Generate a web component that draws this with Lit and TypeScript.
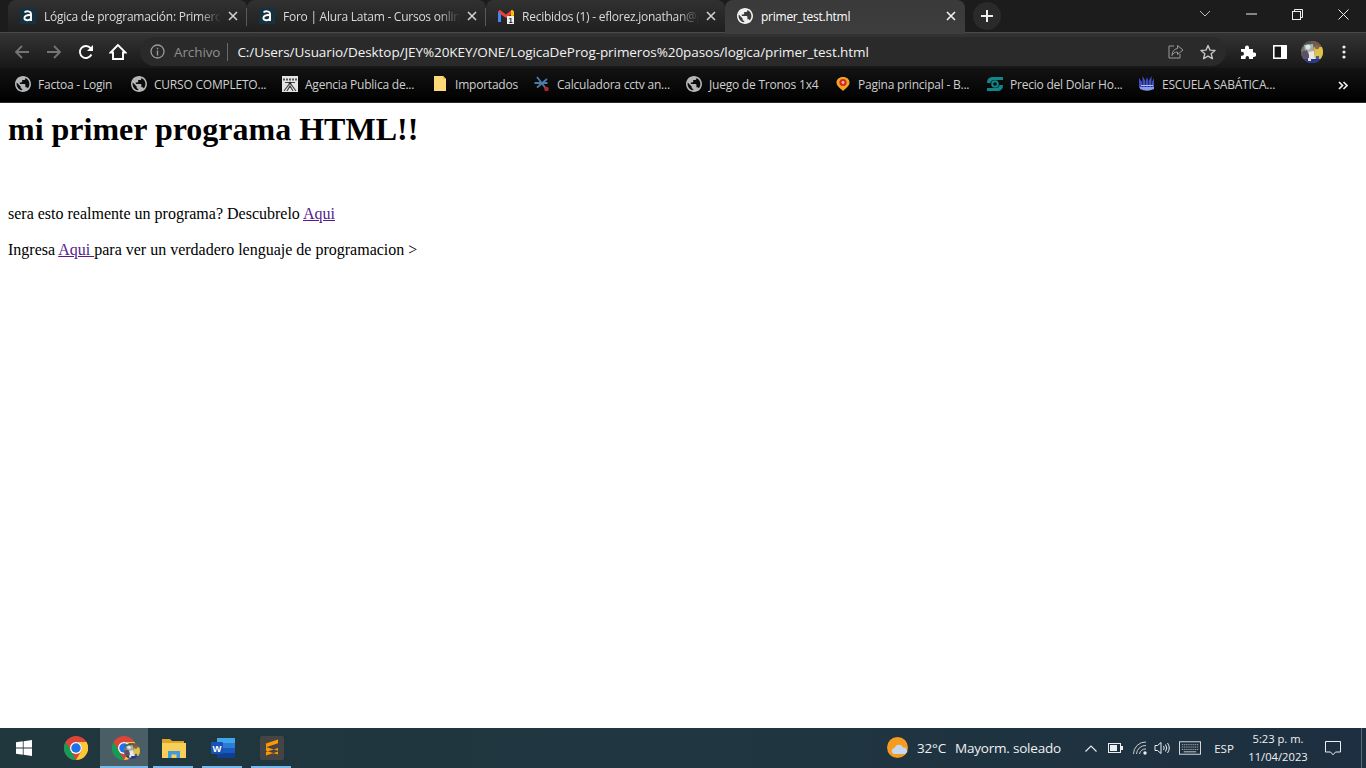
import { LitElement, html, css } from "lit";
import { customElement } from "lit/decorators.js";

const globe = (c = "#b4b6b8") => html`<svg class="ic16" viewBox="2 2 20 20">
  <path fill="${c}" d="M12 2C6.48 2 2 6.48 2 12s4.48 10 10 10 10-4.48 10-10S17.52 2 12 2zm-1 17.93c-3.95-.49-7-3.85-7-7.93 0-.62.08-1.21.21-1.79L9 15v1c0 1.1.9 2 2 2v1.93zm6.9-2.54c-.26-.81-1-1.39-1.9-1.39h-1v-3c0-.55-.45-1-1-1H8v-2h2c.55 0 1-.45 1-1V7h2c1.1 0 2-.9 2-2v-.41c2.93 1.19 5 4.06 5 7.41 0 2.08-.8 3.97-2.1 5.39z"/>
</svg>`;

const alura = html`<svg class="ic16" viewBox="0 0 16 16"><rect width="16" height="16" fill="#14323f"/>
  <path d="M4.600 4.400C5.600 2.800 11 2.600 11 6V13M11 7.200C7 6.700 4.400 7.700 4.400 10.100c0 2.700 4.800 2.900 6.600.5" fill="none" stroke="#fff" stroke-width="1.900"/></svg>`;

const gmail = html`<svg class="ic16" viewBox="0 0 16 16">
  <path d="M0 3.500 2 1.800l6 4.600 6-4.600 2 1.700V14h-3V6.500L8 10 3 6.500V14H0Z" fill="#ea4335"/>
  <path d="M0 3.500V14h3V6Z" fill="#4285f4"/><path d="M13 6v8h3V3.500Z" fill="#34a853"/><path d="M13 2.800 14 1.800 16 3.500V7l-3 2.400Z" fill="#fbbc04"/>
  <rect x="9" y="8" width="7" height="8" fill="#f1f1f1"/><text x="12.500" y="15" font-size="7.500" font-weight="700" text-anchor="middle" fill="#222" font-family="Liberation Sans">1</text></svg>`;

const sena = html`<svg class="ic16" viewBox="0 0 16 16"><rect width="16" height="16" fill="#e4e4e4"/>
  <path d="M1 3.500h14" stroke="#555" stroke-width="2" stroke-dasharray="2 1"/>
  <path d="M2 15 8 7l6 8M5 15 8 10l3 5M3 6.500l10 0" fill="none" stroke="#444" stroke-width="1.200"/><circle cx="8" cy="7" r="1.300" fill="#222"/></svg>`;

const folderBm = html`<svg class="ic16" viewBox="0 0 16 16"><path d="M2 0h9l3 3v12H2Z" fill="#fbd878"/><path d="M11 0l3 3h-3Z" fill="#e8bb4c"/></svg>`;

const cctv = html`<svg class="ic16" viewBox="0 0 16 16"><path d="M3 1 11.500 12M13 3 3 11.500M.5 7h13" stroke="#4c7da8" stroke-width="1.800" fill="none"/><circle cx="12.500" cy="13" r="2.300" fill="#b3262c"/></svg>`;

const pin = html`<svg class="ic16" viewBox="0 0 16 16"><path d="M8 1c4 0 6.500 2.400 6.500 5.600 0 3.400-3 5-6.500 8.400C4.600 11.600 1.500 10 1.500 6.600 1.500 3.400 4 1 8 1Z" fill="#f5a41d"/><circle cx="8" cy="6.500" r="3.600" fill="#d6262b"/><circle cx="8" cy="6.500" r="1.400" fill="#f7c3a3"/></svg>`;

const dolar = html`<svg class="ic16" viewBox="0 0 16 16"><path d="M0 7c0-4 2-6 6-6h10v3H7C5 4 4 5 3.500 7Zm16 2c0 4-2 6-6 6H0v-3h9c2 0 3-1 3.500-3Z" fill="#10868a"/><circle cx="8" cy="8" r="2.800" fill="none" stroke="#10868a" stroke-width="2"/></svg>`;

const escuela = html`<svg class="ic16" viewBox="0 0 16 16"><path d="M0 2l3 4v6H0Zm3.500-2L6.500 5v7h-3Zm3.500 1L8 4l1-3v11H7Zm2.500 4 3-5v12h-3Zm3.500 1 2-4v10h-2Z" fill="#3f4fc0"/><path d="M1 11h14v2q-7 3.500-14 0Z" fill="#8a9bea"/><path d="M2 9.500h12" stroke="#b8c4f5" stroke-width="1"/></svg>`;

const avatar = (s: number, id: string) => html`<svg width="${s}" height="${s}" viewBox="0 0 22 22"><defs><clipPath id="${id}"><circle cx="11" cy="11" r="11"/></clipPath></defs><g clip-path="url(#${id})">
  <rect width="22" height="22" fill="#7b7570"/>
  <path d="M0 0h10v6H0Z" fill="#4f5450"/><path d="M10 0h12v7H10Z" fill="#6e5b4c"/>
  <path d="M3 4 12 3l1 8-8 3Z" fill="#9fb9bc"/><path d="M13 6h9v12h-8Z" fill="#dfc247"/>
  <path d="M0 11 6 9l3 9H0Z" fill="#5b5064"/><path d="M8 11l5-1 1 8H8Z" fill="#ece8e4"/>
  <circle cx="7" cy="6" r="2.400" fill="#dfe2de"/><circle cx="16" cy="6" r="2.300" fill="#8a6548"/><circle cx="11" cy="8" r="1.600" fill="#c89a80"/>
  <rect y="18" width="22" height="4" fill="#27368f"/><rect x="7" y="17" width="3" height="3" fill="#e6e2dd"/><rect x="15" y="15" width="3" height="3" fill="#3e5fa8"/></g></svg>`;

const chromeIcon = (extra = false) => html`<div class="chrome"><svg width="24" height="24" viewBox="0 0 48 48">
  <circle cx="24" cy="24" r="24" fill="#db4437"/>
  <path d="M3.200 12 13.600 30 24 48A24 24 0 0 1 3.200 12Z" fill="#0f9d58"/>
  <path d="M24 12H45A24 24 0 0 1 24 48L34.400 30A12 12 0 0 0 24 12Z" fill="#fcc934"/>
  <circle cx="24" cy="24" r="12" fill="#fff"/><circle cx="24" cy="24" r="9.500" fill="#1a73e8"/></svg>
  ${extra ? html`<span class="chrome-badge">${avatar(16, "avb")}</span>` : ""}</div>`;

const tabs = [
  { icon: alura, t: "Lógica de programación: Primeros pasos" },
  { icon: alura, t: "Foro | Alura Latam - Cursos online de tecnología" },
  { icon: gmail, t: "Recibidos (1) - eflorez.jonathan@gmail.com" },
];

const bookmarks = [
  { i: globe(), t: "Factoa - Login", w: 116 },
  { i: globe(), t: "CURSO COMPLETO...", w: 151 },
  { i: sena, t: "Agencia Publica de...", w: 150 },
  { i: folderBm, t: "Importados", w: 102 },
  { i: cctv, t: "Calculadora cctv an...", w: 152 },
  { i: globe(), t: "Juego de Tronos 1x4", w: 149 },
  { i: pin, t: "Pagina principal - B...", w: 152 },
  { i: dolar, t: "Precio del Dolar Ho...", w: 152 },
  { i: escuela, t: "ESCUELA SABÁTICA...", w: 150 },
];

const closeX = html`<svg class="x" width="10" height="10" viewBox="0 0 10 10"><path d="M1 1l8 8M9 1 1 9" stroke="currentColor" stroke-width="1.600"/></svg>`;

@customElement("app-root")
export class AppRoot extends LitElement {
  static styles = css`
    :host { display: block; width: 1366px; height: 768px; overflow: hidden; background: #fff; }
    .screen { display: flex; flex-direction: column; height: 768px; }
    .ic16 { width: 16px; height: 16px; flex: none; display: block; }
    .ui { font-family: "Open Sans", "Noto Sans", sans-serif; }

    .strip { height: 33px; flex: none; display: flex; padding-left: 8px; background: #1c1c1c; border-bottom: 1px solid #4a4a4a; box-sizing: border-box; position: relative; }
    .tab { width: 239px; flex: none; box-sizing: border-box; height: 32px; display: flex; align-items: center; padding: 0 9px 0 12px; color: #dadada; font-size: 12px; background: linear-gradient(#313131 0, #1f1f1f 100%); border-radius: 8px 8px 0 0; position: relative; }
    .tab + .tab::before { content: ""; position: absolute; left: -1px; top: 8px; height: 18px; width: 1px; background: #5a5a5a; }
    .tab .ttl { flex: 1; min-width: 0; margin: 0 7px 0 8px; white-space: nowrap; overflow: hidden; letter-spacing: -.25px; -webkit-mask-image: linear-gradient(90deg, #000 88%, transparent); mask-image: linear-gradient(90deg, #000 88%, transparent); }
    .tab .x { flex: none; color: #d0d0d0; }
    .tab.active { height: 34px; z-index: 1; color: #fff; background: linear-gradient(#3a3a3a 0, #3d3d3d 100%); padding: 0 9px 2px 12px; width: 240px; }
    .tab.active::before { display: none; }
    .tab.active .ttl { -webkit-mask-image: none; mask-image: none; }
    .tab.active .x { color: #f2f2f2; }
    .newtab { width: 28px; height: 28px; border-radius: 50%; background: #2a2a2a; margin: 2px 0 0 8px; display: flex; align-items: center; justify-content: center; flex: none; }
    .winctl { margin-left: auto; display: flex; }
    .winctl div { width: 46px; height: 28px; display: flex; align-items: center; justify-content: center; }

    .toolbar { height: 35px; flex: none; display: flex; align-items: center; background: linear-gradient(#343434 0, #181818 100%); box-sizing: border-box; padding: 2px 0 0 6px; }
    .navbtn { width: 32px; height: 32px; display: flex; align-items: center; justify-content: center; flex: none; }
    .omni { margin-left: 6px; width: 1086px; height: 29px; box-sizing: border-box; border-radius: 15px; background: #2a2a2a; display: flex; align-items: center; padding: 0 10px 0 10px; flex: none; }
    .archivo { color: #8f8f8f; font-size: 13.500px; margin-left: 9px; letter-spacing: -.1px; padding-right: 7px; border-right: 1px solid #6a6a6a; line-height: 18px; }
    .url { color: #f2f2f2; font-size: 13.500px; margin-left: 9px; letter-spacing: -.07px; white-space: nowrap; }
    .omni .right { margin-left: auto; display: flex; gap: 16px; align-items: center; }
    .ext { margin-left: 6px; }

    .bars { height: 35px; flex: none; display: flex; align-items: center; padding: 0 0 2px 15px; background: linear-gradient(#131313 0, #000 100%); box-sizing: border-box; border-bottom: 1px solid #2a2a2a; }
    .bm { display: flex; align-items: center; gap: 7px; flex: none; box-sizing: border-box; color: #cfcfcf; font-size: 12px; white-space: nowrap; letter-spacing: -.22px; }
    .more { margin-left: auto; margin-right: 18px; }

    .page { flex: 1; min-height: 0; background: #fff; color: #000; font-family: "Liberation Serif", "Times New Roman", serif; font-size: 16px; padding: 8px 8px 0; }
    h1 { font-size: 32px; font-weight: 700; margin: 0 0 57px; line-height: 37px; }
    p { margin: 0 0 18px; line-height: 18px; }
    a { color: #551a8b; text-decoration: underline; }

    .task { height: 40px; flex: none; background: linear-gradient(90deg, #21373e 0, #1f3540 60%, #1d2f40 100%); display: flex; align-items: stretch; color: #f0f0f0; padding-right: 4px; box-sizing: border-box; }
    .start { width: 48px; padding-right: 3px; display: flex; align-items: center; justify-content: center; flex: none; }
    .app { width: 49px; flex: none; box-sizing: border-box; display: flex; align-items: center; justify-content: center; position: relative; }
    .app.on::after { content: ""; position: absolute; left: 4px; right: 5px; bottom: 0; height: 2px; background: #76b9ed; }
    .app.active { background: #4a5e65; width: 48px; margin-right: 1px; }
    .app.active::after { left: 0; right: 0; }
    .chrome { position: relative; width: 24px; height: 24px; }
    .chrome-badge { position: absolute; right: -4px; bottom: -4px; display: block; }
    .tray { margin-left: auto; display: flex; align-items: center; }
    .weather { display: flex; align-items: center; font-size: 13.500px; letter-spacing: -.2px; gap: 8px; margin-right: 19px; }
    .weather .cond { margin-left: 1px; }
    .tr { width: 22px; display: flex; justify-content: center; align-items: center; flex: none; }
    .tr.chev { margin-right: 2px; }
    .tr.batt { margin-right: 3px; }
    .tr.kbd { margin-left: 6px; }
    .esp { font-size: 11.500px; margin: 0 10px 0 13px; width: 20px; text-align: center; }
    .clock { width: 68px; font-size: 11.200px; line-height: 18px; text-align: center; }
    .notif { margin: 0 3px 0 13px; width: 33px; display: flex; justify-content: flex-start; align-items: center; }
    .edge { width: 1px; align-self: stretch; background: #5a6a72; flex: none; }
  `;

  render() {
    return html`<div class="screen ui">
      <div class="strip">
        ${tabs.map(t => html`<div class="tab">${t.icon}<span class="ttl">${t.t}</span>${closeX}</div>`)}
        <div class="tab active">${globe("#f0f0f0")}<span class="ttl">primer_test.html</span>${closeX}</div>
        <div class="newtab"><svg width="14" height="14" viewBox="0 0 14 14"><path d="M7 1v12M1 7h12" stroke="#eee" stroke-width="2"/></svg></div>
        <div class="winctl">
          <div><svg width="12" height="8" viewBox="0 0 12 8"><path d="M1 1l5 5 5-5" fill="none" stroke="#bbb" stroke-width="1"/></svg></div>
          <div><svg width="11" height="2" viewBox="0 0 11 2"><path d="M0 1h11" stroke="#eee" stroke-width="1"/></svg></div>
          <div><svg width="11" height="11" viewBox="0 0 11 11"><rect x=".5" y="2.500" width="8" height="8" fill="none" stroke="#eee"/><path d="M2.500 2.500V.5h8v8H8.500" fill="none" stroke="#eee"/></svg></div>
          <div><svg width="11" height="11" viewBox="0 0 11 11"><path d="M.5.5l10 10M10.500.5l-10 10" stroke="#eee"/></svg></div>
        </div>
      </div>

      <div class="toolbar">
        <div class="navbtn"><svg width="16" height="16" viewBox="0 0 16 16"><path d="M15 8H2M8 2 2 8l6 6" fill="none" stroke="#747474" stroke-width="1.800"/></svg></div>
        <div class="navbtn"><svg width="16" height="16" viewBox="0 0 16 16"><path d="M1 8h13M8 2l6 6-6 6" fill="none" stroke="#747474" stroke-width="1.800"/></svg></div>
        <div class="navbtn"><svg width="16" height="16" viewBox="0 0 16 16"><path d="M13.400 10.500A6 6 0 1 1 12.600 4.200" fill="none" stroke="#fff" stroke-width="1.900"/><path d="M15 1v6H9Z" fill="#fff"/></svg></div>
        <div class="navbtn"><svg width="18" height="18" viewBox="0 0 18 18"><path d="M9 2 1.500 9.500h2.500V16h10V9.500h2.500Z" fill="none" stroke="#fff" stroke-width="1.900"/></svg></div>
        <div class="omni">
          <svg width="15" height="15" viewBox="0 0 15 15"><circle cx="7.500" cy="7.500" r="6.500" fill="none" stroke="#9a9a9a" stroke-width="1.300"/><path d="M7.500 6.500v5M7.500 3.700v1.600" stroke="#9a9a9a" stroke-width="1.400"/></svg>
          <span class="archivo">Archivo</span>
          <span class="url">C:/Users/Usuario/Desktop/JEY%20KEY/ONE/LogicaDeProg-primeros%20pasos/logica/primer_test.html</span>
          <div class="right">
            <svg width="16" height="16" viewBox="0 0 16 16"><path d="M6 2H1v12h11v-4" fill="none" stroke="#9a9a9a" stroke-width="1"/><path d="M9.500 1.500 15 6l-5.500 4.500V8C6.500 8 5 9.500 4 11.500 4 7.500 6 5 9.500 4.500Z" fill="none" stroke="#9a9a9a" stroke-width="1"/></svg>
            <svg width="16" height="16" viewBox="0 0 16 16"><path d="M8 1.500l2 4.600 5 .4-3.800 3.300 1.200 4.900L8 12.100l-4.400 2.600 1.200-4.900L1 6.500l5-.4Z" fill="none" stroke="#c4c4c4" stroke-width="1.400" stroke-linejoin="round"/></svg>
          </div>
        </div>
        <div class="navbtn ext"><svg width="16" height="16" viewBox="0 0 16 16"><path d="M1 5h4V3.500a2 2 0 0 1 4 0V5h4v3.500h1a2.200 2.200 0 0 1 0 4.400h-1V15H9v-1.200a1.700 1.700 0 0 0-3.400 0V15H1v-3.200h1a2 2 0 0 0 0-4H1Z" fill="#fff"/></svg></div>
        <div class="navbtn"><svg width="14" height="14" viewBox="0 0 14 14"><rect width="14" height="14" fill="#fff"/><rect x="1.600" y="1.600" width="6.400" height="10.800" fill="#161616"/></svg></div>
        <div class="navbtn">${avatar(22, "avt")}</div>
        <div class="navbtn"><svg width="4" height="14" viewBox="0 0 4 14"><circle cx="2" cy="2" r="1.600" fill="#eee"/><circle cx="2" cy="7" r="1.600" fill="#eee"/><circle cx="2" cy="12" r="1.600" fill="#eee"/></svg></div>
      </div>

      <div class="bars">
        ${bookmarks.map(b => html`<div class="bm" style="width:${b.w}px">${b.i}<span>${b.t}</span></div>`)}
        <div class="more"><svg width="10" height="9" viewBox="0 0 10 9"><path d="M1 1l3.500 3.500L1 8M5.500 1 9 4.500 5.500 8" fill="none" stroke="#eee" stroke-width="1.700"/></svg></div>
      </div>

      <main class="page">
        <h1>mi primer programa HTML!!</h1>
        <p>sera esto realmente un programa? Descubrelo <a href="#">Aqui</a></p>
        <p>Ingresa <a href="#">Aqui </a>para ver un verdadero lenguaje de programacion &gt;</p>
      </main>

      <div class="task">
        <div class="start"><svg width="16" height="16" viewBox="0 0 16 16"><path d="M0 2.300 6.800 1.300v6.300H0ZM7.600 1.200 16 0v7.600H7.600ZM0 8.400h6.800v6.300L0 13.700ZM7.600 8.400H16V16L7.600 14.800Z" fill="#fff"/></svg></div>
        <div class="app">${chromeIcon()}</div>
        <div class="app active on">${chromeIcon(true)}</div>
        <div class="app on"><svg width="24" height="20" viewBox="0 0 24 20"><path d="M0 1h8l2 2h12v3H0Z" fill="#e0a526"/><path d="M0 5h24v15H0Z" fill="#f7cf59"/><path d="M6 20v-7h12v7h-3.500v-3.500h-5V20Z" fill="#3e9bdc"/></svg></div>
        <div class="app on"><svg width="24" height="22" viewBox="0 0 24 22"><rect x="6" y="1" width="18" height="20" rx="1" fill="#2b7cd3"/><rect x="6" y="1" width="18" height="5" fill="#41a5ee"/><rect x="6" y="11" width="18" height="5" fill="#185abd"/><rect x="6" y="16" width="18" height="5" fill="#103f91"/><rect y="5" width="12" height="12" rx="1" fill="#1852b4"/><text x="6" y="14.500" text-anchor="middle" font-size="9.500" font-weight="700" fill="#fff" font-family="Liberation Sans">W</text></svg></div>
        <div class="app on"><svg width="24" height="24" viewBox="0 0 24 24"><rect width="24" height="24" rx="2" fill="#444"/><path d="M18 3.500v3.800L6 11.300V7.500ZM6 11 18 14.800v3.800L6 14.800ZM6 16v3.500l12-4V12Z" fill="#ff9800"/></svg></div>

        <div class="tray">
          <div class="weather">
            <svg width="22" height="22" viewBox="0 0 22 22"><circle cx="10.500" cy="10.500" r="10.500" fill="#f59b1f"/><path d="M7 17a3 3 0 0 1 .6-5.900 4.500 4.500 0 0 1 8.500-.6 3.300 3.300 0 0 1 1.400 6.500Z" fill="#c4d9ee"/></svg>
            <span>32°C</span><span class="cond">Mayorm. soleado</span>
          </div>
          <div class="tr chev"><svg width="12" height="7" viewBox="0 0 12 7"><path d="M.5 6.500 6 1l5.500 5.500" fill="none" stroke="#eee" stroke-width="1.100"/></svg></div>
          <div class="tr batt"><svg width="15" height="10" viewBox="0 0 15 10"><rect x=".5" y=".5" width="12" height="9" fill="none" stroke="#eee"/><rect x="2" y="2" width="7" height="6" fill="#eee"/><rect x="13" y="3" width="2" height="4" fill="#eee"/></svg></div>
          <div class="tr"><svg width="15" height="14" viewBox="0 0 15 14"><g fill="none" stroke="#ccc" stroke-width="1"><path d="M.5 13A12 12 0 0 1 13 1"/><path d="M3.500 13A9 9 0 0 1 13 4.500"/><path d="M6.500 13A6 6 0 0 1 13 8"/></g><circle cx="12" cy="12" r="1.700" fill="#eee"/></svg></div>
          <div class="tr"><svg width="16" height="14" viewBox="0 0 16 14"><path d="M1 4.500h2.500L7 1.500v11l-3.500-3H1Z" fill="none" stroke="#eee"/><path d="M9.500 5q1.500 2 0 4M11.500 3.500q2.500 3.500 0 7M13.500 2q3.500 5 0 10" fill="none" stroke="#eee"/></svg></div>
          <div class="tr kbd"><svg width="23" height="14" viewBox="0 0 23 14"><rect x=".5" y=".5" width="22" height="13" fill="none" stroke="#ddd"/><path d="M3 3.500h17M3 6h17M3 8.500h17" stroke="#ccc" stroke-dasharray="1 1"/><path d="M5 11h13" stroke="#ccc"/></svg></div>
          <span class="esp">ESP</span>
          <div class="clock"><div>5:23 p. m.</div><div>11/04/2023</div></div>
          <div class="notif"><svg width="16" height="15" viewBox="0 0 16 15"><path d="M.5.5h15v10.500h-5L8 13.800 5.500 11h-5Z" fill="none" stroke="#eee"/></svg></div>
          <div class="edge"></div>
        </div>
      </div>
    </div>`;
  }
}
